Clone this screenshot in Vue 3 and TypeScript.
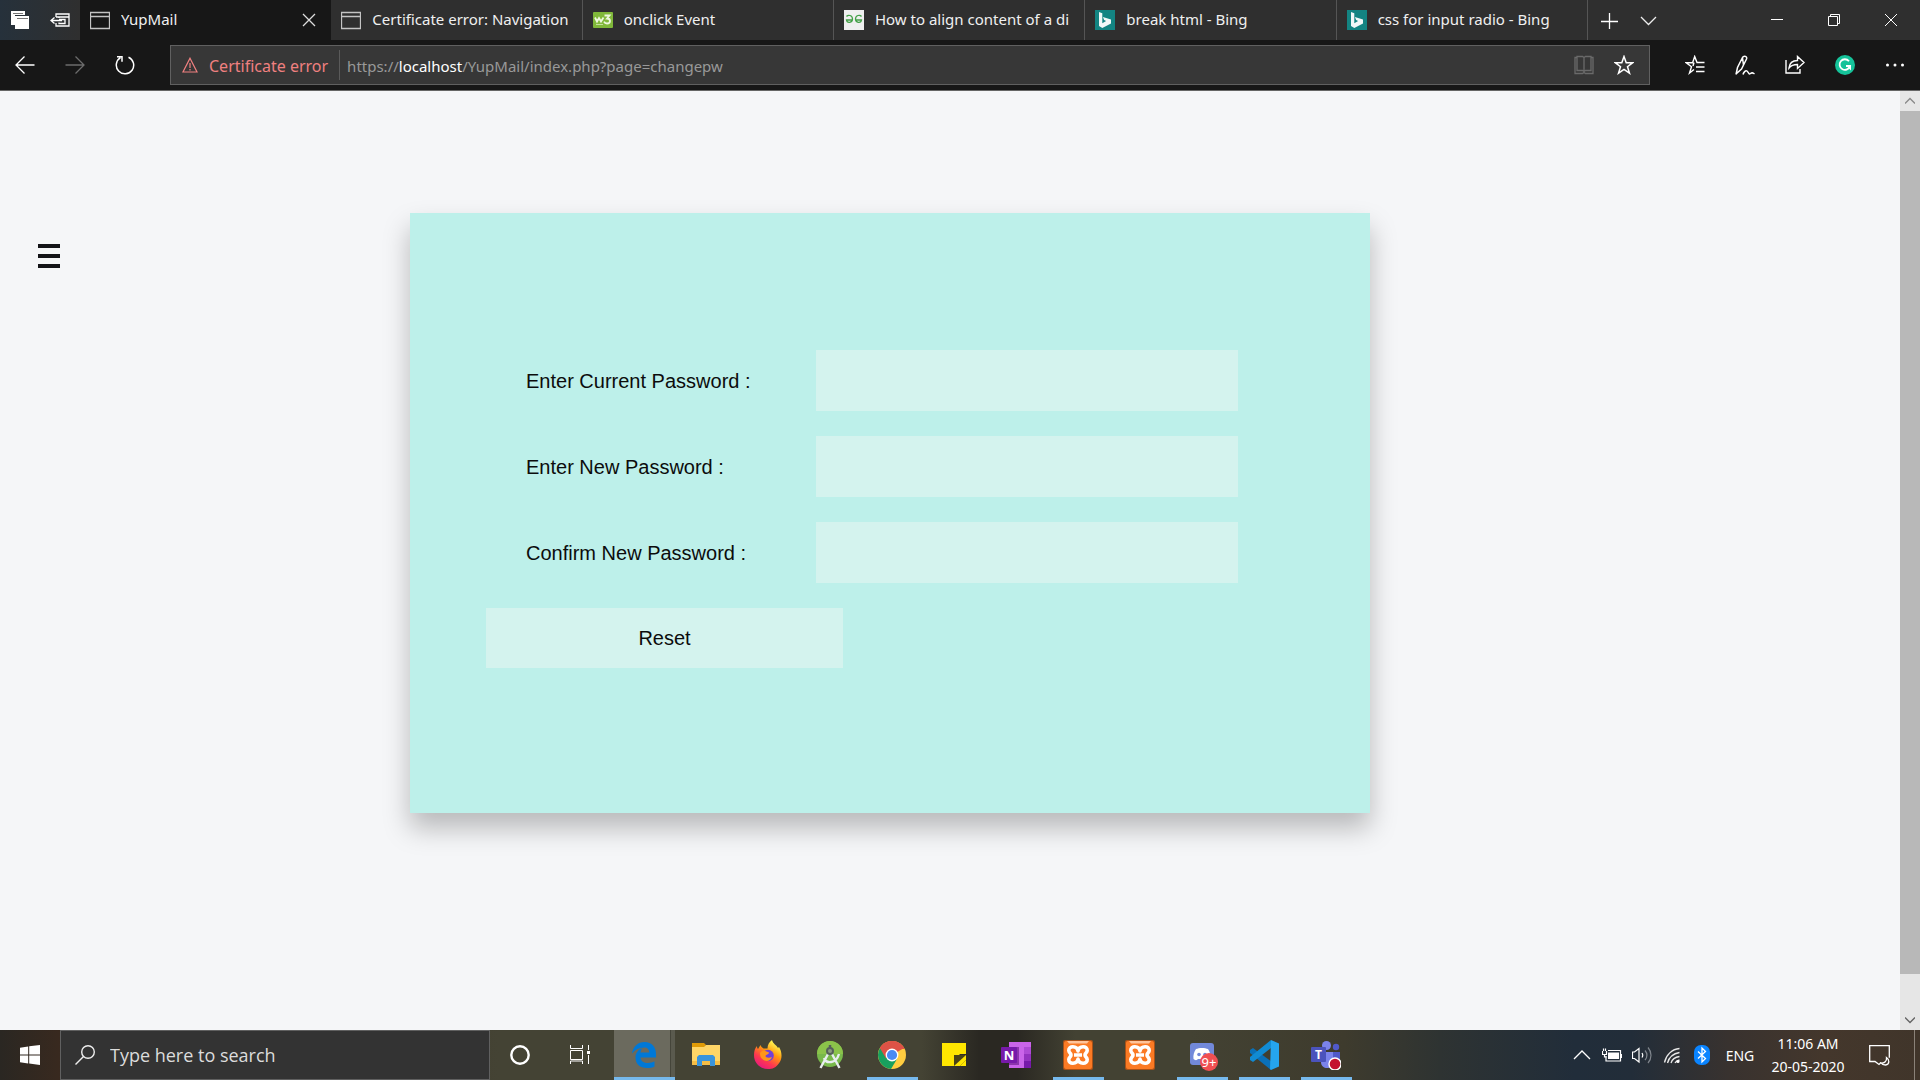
<script setup lang="ts">
import { ref } from 'vue'

type TabIcon = 'page' | 'w3' | 'gfg' | 'bing'

interface Tab {
  title: string
  icon: TabIcon
}

interface Field {
  id: string
  label: string
}

interface TaskApp {
  id: string
  name: string
  open: boolean
}

const tabs: Tab[] = [
  { title: 'YupMail', icon: 'page' },
  { title: 'Certificate error: Navigation', icon: 'page' },
  { title: 'onclick Event', icon: 'w3' },
  { title: 'How to align content of a di', icon: 'gfg' },
  { title: 'break html - Bing', icon: 'bing' },
  { title: 'css for input radio - Bing', icon: 'bing' },
]

const fields: Field[] = [
  { id: 'current', label: 'Enter Current Password :' },
  { id: 'new', label: 'Enter New Password :' },
  { id: 'confirm', label: 'Confirm New Password :' },
]

const apps: TaskApp[] = [
  { id: 'edge', name: 'Microsoft Edge', open: true },
  { id: 'explorer', name: 'File Explorer', open: false },
  { id: 'firefox', name: 'Firefox', open: false },
  { id: 'studio', name: 'Android Studio', open: false },
  { id: 'chrome', name: 'Google Chrome', open: true },
  { id: 'notes', name: 'Sticky Notes', open: false },
  { id: 'onenote', name: 'OneNote', open: false },
  { id: 'xampp', name: 'XAMPP', open: true },
  { id: 'xampp', name: 'XAMPP Control', open: false },
  { id: 'discord', name: 'Discord', open: true },
  { id: 'vscode', name: 'Visual Studio Code', open: true },
  { id: 'teams', name: 'Microsoft Teams', open: true },
]

const active = ref(0)
const values = ref<Record<string, string>>({ current: '', new: '', confirm: '' })

function reset(): void {
  values.value = { current: '', new: '', confirm: '' }
}
</script>

<template>
  <div class="screen">
    <header class="tabbar">
      <div class="tab-tools">
        <button class="tool-40" aria-label="Tabs you've set aside">
          <svg width="20" height="20" viewBox="0 0 20 20">
            <path d="M1 1h14v4H5v10H1z" fill="#fff" />
            <path d="M5 6h14v13H5z" fill="#fff" />
            <path d="M3 3.500h10M7 8.500h11" stroke="#777" stroke-width="1.200" />
          </svg>
        </button>
        <button class="tool-40" aria-label="Set these tabs aside">
          <svg width="20" height="20" viewBox="0 0 20 20" fill="none" stroke="#fff" stroke-width="1.300">
            <path d="M6 7V4h13v12H6v-3M6 7h13M1 10.500h11M4.500 7.500 1 10.500l3.500 3M9 8v-1M9 12.500v1h6V9.500h-6" />
          </svg>
        </button>
      </div>
      <nav class="tabs" role="tablist">
        <div
          v-for="(tab, i) in tabs"
          :key="tab.title"
          class="tab"
          :class="{ active: i === active }"
          role="tab"
          @click="active = i"
        >
          <svg v-if="tab.icon === 'page'" class="tab-icon" viewBox="0 0 20 20" fill="none" stroke="#c4c4c4">
            <path d="M.5 2.500h19v16H.5zM.5 6.500h19" stroke-width="1.300" />
          </svg>
          <svg v-else-if="tab.icon === 'w3'" class="tab-icon" viewBox="0 0 20 20">
            <rect y="2" width="20" height="16" rx="1" fill="#80b83a" />
            <path
              d="M2 7.500l2 4 2-3.500 2 3.500 2.500-4M11.500 5.500h5l-2.500 3c4 0 4 5 0 5-1.500 0-2.500-.8-3-1.800"
              fill="none"
              stroke="#eef7df"
              stroke-width="1.800"
            />
            <path d="M3 14.500h7" stroke="#c5e09e" />
          </svg>
          <svg v-else-if="tab.icon === 'gfg'" class="tab-icon" viewBox="0 0 20 20">
            <rect width="20" height="20" fill="#efefef" />
            <path
              d="M2.500 6.500C4 4.500 8.500 5 8.500 9s-5.500 4.500-6 1h6M17.500 6.500C16 4.500 11.500 5 11.500 9s5.500 4.500 6 1h-6"
              fill="none"
              stroke="#43a047"
              stroke-width="1.300"
            />
          </svg>
          <svg v-else class="tab-icon" viewBox="0 0 20 20">
            <rect width="20" height="20" fill="#138482" />
            <path d="M4 2l3.300 1.200v10l3.800-2.200-2-1-1.200-3L16 9.500v4L7.300 18 4 16z" fill="#f2f8f8" />
          </svg>
          <span class="tab-title">{{ tab.title }}</span>
          <button v-if="i === active" class="tab-close" aria-label="Close tab">
            <svg width="14" height="14" viewBox="0 0 14 14" stroke="#ddd" stroke-width="1.300">
              <path d="M1 1l12 12M13 1 1 13" />
            </svg>
          </button>
        </div>
      </nav>
      <div class="tab-actions">
        <button class="tool-39" aria-label="New tab">
          <svg width="17" height="17" viewBox="0 0 17 17" stroke="#fff" stroke-width="1.300">
            <path d="M8.500 1v17M0 9.500h17" />
          </svg>
        </button>
        <button class="tool-39" aria-label="Show tab previews">
          <svg width="17" height="17" viewBox="0 0 17 17" fill="none" stroke="#eee" stroke-width="1.300">
            <path d="M1 5l7.500 7.500L16 5" />
          </svg>
        </button>
      </div>
      <div class="window-controls">
        <button aria-label="Minimize">
          <svg width="13" height="12" viewBox="0 0 13 12" stroke="#fff"><path d="M0 5.500h12" /></svg>
        </button>
        <button aria-label="Restore">
          <svg width="13" height="12" viewBox="0 0 13 12" fill="none" stroke="#fff">
            <path d="M.5 2.500h9v9h-9zM2.500 2.500v-2h9v9h-2" />
          </svg>
        </button>
        <button aria-label="Close">
          <svg width="13" height="12" viewBox="0 0 13 12" stroke="#fff"><path d="M0 0l12 12M12 0 0 12" /></svg>
        </button>
      </div>
    </header>

    <div class="toolbar">
      <button class="tool-50" aria-label="Back">
        <svg width="20" height="20" viewBox="0 0 20 20" fill="none" stroke="#fff" stroke-width="1.300">
          <path d="M19.500 10H1M9.500 1.500 1 10l8.500 8.500" />
        </svg>
      </button>
      <button class="tool-50" aria-label="Forward">
        <svg width="20" height="20" viewBox="0 0 20 20" fill="none" stroke="#6c6c6c" stroke-width="1.300">
          <path d="M.5 10H19M10.500 1.500 19 10l-8.500 8.500" />
        </svg>
      </button>
      <button class="tool-50" aria-label="Refresh">
        <svg width="20" height="20" viewBox="0 0 20 20" fill="none" stroke="#fff" stroke-width="1.500">
          <path d="M13.500 2.200A8.700 8.700 0 1 1 5.500 2.700M2 1.700h5v5" />
        </svg>
      </button>
      <div class="address">
        <svg class="warning" width="16" height="16" viewBox="0 0 16 16" fill="none" stroke="#f08080" stroke-width="1.200">
          <path d="M8 1.200 15 15H1zM8 6v5M8 12v1.500" />
        </svg>
        <span class="cert">Certificate error</span>
        <span class="divider"></span>
        <div class="url" role="textbox" aria-label="Address" contenteditable="true" spellcheck="false">https://<span class="host">localhost</span>/YupMail/index.php?page=changepw</div>
        <button class="tool-40" aria-label="Reading view">
          <svg width="20" height="20" viewBox="0 0 20 20" fill="none" stroke="#6a6a6a" stroke-width="1.300">
            <path d="M3 2.500H1v16h7.500l1.500-1 1.500 1H19v-16h-2M3 1.500h5.500l1.500 1 1.500-1H17v14h-5.500l-1.500 1-1.500-1H3zM10 2.500v15" />
          </svg>
        </button>
        <button class="tool-40" aria-label="Add to favorites">
          <svg width="20" height="20" viewBox="0 0 20 20" fill="none" stroke="#fff" stroke-width="1.500">
            <path d="M10 1.500l2.200 6.200h6.600l-5.300 4 2 6.500L10 14.300l-5.500 3.900 2-6.500-5.300-4h6.600z" />
          </svg>
        </button>
      </div>
      <div class="toolbar-right">
        <button class="tool-50" aria-label="Favorites">
          <svg width="20" height="20" viewBox="0 0 20 20" fill="none" stroke="#fff" stroke-width="1.400">
            <path d="M19.500 7.500H12L9.700 1.500 7.600 7.700H1.200l5.300 4-2 6.300 4.500-3.500M9 7.500 8 11M11 12h8.500M11 16.500h8.500" />
          </svg>
        </button>
        <button class="tool-50" aria-label="Add notes">
          <svg width="20" height="20" viewBox="0 0 20 20" fill="none" stroke="#fff" stroke-width="1.500">
            <path d="M1 19.500l1.500-7L7.500 2.500c1.500-2.500 5-1 4 1.500L6.500 14 1 19M7.500 3l1 7M8 19.500c.5-2 2.500-4.500 4-3.500 2 1.500 1.500 4 3.500 2.500s2.500-.5 4 .5" />
          </svg>
        </button>
        <button class="tool-50" aria-label="Share">
          <svg width="20" height="20" viewBox="0 0 20 20" fill="none" stroke="#fff" stroke-width="1.400">
            <path d="M1 5v13h14v-4M4 13c.5-5 3.500-7.500 8.500-7.500V1.500l6.500 6-6.500 6V9.500C8.500 9.500 6 10.500 4 13z" />
          </svg>
        </button>
        <button class="tool-50" aria-label="Grammarly">
          <svg width="20" height="20" viewBox="0 0 20 20">
            <circle cx="10" cy="10" r="10" fill="#15c39a" />
            <path d="M14 6.200A5.300 5.300 0 1 0 15 11h-4" fill="none" stroke="#fff" stroke-width="1.800" />
            <path d="M11.500 11H16v4.500z" fill="#fff" />
          </svg>
        </button>
        <button class="tool-50" aria-label="Settings and more">
          <svg width="20" height="20" viewBox="0 0 20 20" fill="#fff">
            <circle cx="2.500" cy="10" r="1.500" /><circle cx="10" cy="10" r="1.500" /><circle cx="17.500" cy="10" r="1.500" />
          </svg>
        </button>
      </div>
    </div>

    <div class="viewport">
      <main class="page">
        <aside class="side">
          <button class="menu" aria-label="Open menu"><span></span><span></span><span></span></button>
        </aside>
        <form class="card" @submit.prevent="reset">
          <div v-for="field in fields" :key="field.id" class="row">
            <label :for="field.id">{{ field.label }}</label>
            <input :id="field.id" v-model="values[field.id]" type="password" />
          </div>
          <button class="submit" type="submit">Reset</button>
        </form>
      </main>
      <div class="scrollbar">
        <button aria-label="Scroll up">
          <svg width="10" height="10" viewBox="0 0 10 10" fill="none" stroke="#8a8a8a" stroke-width="1.400"><path d="M0 7.500 5 2.500l5 5" /></svg>
        </button>
        <div class="track"><div class="thumb"></div></div>
        <button aria-label="Scroll down">
          <svg width="10" height="10" viewBox="0 0 10 10" fill="none" stroke="#666" stroke-width="1.400"><path d="M0 2.500l5 5 5-5" /></svg>
        </button>
      </div>
    </div>

    <footer class="taskbar">
      <button class="task-60" aria-label="Start">
        <svg width="20" height="20" viewBox="0 0 20 20" fill="#fff">
          <path d="M0 2.700 8.200 1.500V9.400H0zM9.200 1.300 20 0v9.400H9.200zM0 10.400h8.200v8L0 17.300zM9.200 10.400H20V20L9.200 18.500z" />
        </svg>
      </button>
      <label class="search">
        <svg width="20" height="20" viewBox="0 0 20 20" fill="none" stroke="#eee" stroke-width="1.400">
          <circle cx="13" cy="7" r="6.300" /><path d="M8.500 11.500.5 19.500" />
        </svg>
        <input type="text" aria-label="Search" placeholder="Type here to search" />
      </label>
      <button class="task-60" aria-label="Cortana">
        <svg width="20" height="20" viewBox="0 0 20 20" fill="none" stroke="#fff" stroke-width="2.400">
          <circle cx="10" cy="10" r="8.700" />
        </svg>
      </button>
      <button class="task-60" aria-label="Task View">
        <svg width="20" height="20" viewBox="0 0 20 20" fill="none" stroke="#fff">
          <path d="M.5 0v3.500h12V0M.5 5.500h12v9H.5zM.5 19v-3h12v3M18.500 0v5M18.500 10v9" />
          <path d="M17 6h3v3h-3z" fill="#fff" stroke="none" />
        </svg>
      </button>
      <div class="apps">
        <button
          v-for="app in apps"
          :key="app.name"
          class="app"
          :class="{ open: app.open, focused: app.id === 'edge' }"
          :aria-label="app.name"
        >
          <svg width="30" height="30" viewBox="0 0 30 30">
            <g v-if="app.id === 'edge'">
              <path
                d="M3 13.500C4 6.500 9 2 15.500 2 23 2 27 7 27 14v3.500H11.500c.3 4 3.500 5.500 7.500 5.500 2.500 0 4.700-.6 6.500-1.700v5.200C23.500 27.500 21 28 18 28c-7 0-11.500-4-11.500-10.500 0-4.500 2.500-8 7-9.500-1 1.200-1.800 2.800-2 4.500h8.700c0-3-1.500-5-4.700-5C10 7.500 6 9.500 3 13.500z"
                fill="#0078d7"
              />
            </g>
            <g v-else-if="app.id === 'explorer'">
              <path d="M1 3h12l2 2-2 3H1z" fill="#e09b07" />
              <path d="M1 7h12l2-2h14v20H1z" fill="#ffd667" />
              <path d="M1 21h28v4H1z" fill="#f5bd45" />
              <path d="M6 26V17l2-2h14l2 2v9h-5v-5h-8v5z" fill="#3994dc" />
            </g>
            <g v-else-if="app.id === 'firefox'">
              <defs>
                <linearGradient id="fx" x1="0.8" y1="0" x2="0.2" y2="1">
                  <stop offset="0.1" stop-color="#fff44f" /><stop offset="0.4" stop-color="#ff980e" />
                  <stop offset="0.7" stop-color="#ff3750" /><stop offset="1" stop-color="#e31587" />
                </linearGradient>
              </defs>
              <path
                d="M4 6c0 2 .5 2.500 1 3l2.500-4c.5 2 2 3 3.500 3.500h3.500C14.500 5 16 2 19 0c1 4 4 4.500 6 8l1-1c3 4.500 3.500 11 .5 15.500C23 28 19.500 29 15 29 7 29 1 23 1 15c0-4 1-7 3-9z"
                fill="url(#fx)"
              />
              <circle cx="15" cy="15.500" r="5.800" fill="#7040d8" />
              <path d="M7 13c2-3 5-2.500 6.500-1.500l2.500 1c0 2-3 2-3.500 3.500 0 2 4 2 6.500 1-1.500 4-5.500 5-8.500 3S7 16 7 13z" fill="#ff9519" />
            </g>
            <g v-else-if="app.id === 'studio'">
              <circle cx="15" cy="14" r="13" fill="#78b84b" />
              <path d="M2 14a13 13 0 0 1 26 0z" fill="#8bc34a" />
              <path d="M13 14 5.500 28M17 14l7.500 14M9 18c2 6 12 6 15-4" fill="none" stroke="#e8edf0" stroke-width="2.400" />
              <circle cx="15" cy="11" r="3" fill="#8b9a80" stroke="#55605a" stroke-width="2" />
              <path d="M15 5v4" stroke="#55605a" stroke-width="2.500" />
            </g>
            <g v-else-if="app.id === 'chrome'">
              <circle cx="15" cy="15" r="14" fill="#ffcd40" />
              <path d="M15 15 2.900 8a14 14 0 0 1 24.200 0z" fill="#de5246" />
              <path d="M2.900 8A14 14 0 0 0 14 29l6-10-5-4z" fill="#18a05e" />
              <path d="M2.900 8 9 18.500 15 9h12.600A14 14 0 0 0 2.900 8z" fill="#de5246" />
              <circle cx="15" cy="15" r="6.400" fill="#fff" /><circle cx="15" cy="15" r="5.100" fill="#4a8af4" />
            </g>
            <g v-else-if="app.id === 'notes'">
              <path d="M3 3h24v11h-6l-6 6v6H3z" fill="#ffe600" />
              <path d="M15 26V15h12z" fill="#4a4315" />
              <path d="M21 26l6-6v6z" fill="#ffe600" />
              <path d="M15 26l12-11v5l-6 6z" fill="#ffe600" />
            </g>
            <g v-else-if="app.id === 'onenote'">
              <path d="M8 2h22v26H8z" fill="#ca64ea" />
              <path d="M23 7h7v7h-7z" fill="#ae4bd5" /><path d="M23 14h7v7h-7z" fill="#9332bf" /><path d="M23 21h7v7h-7z" fill="#7719aa" />
              <path d="M8 7h10v18H8z" fill="#8b35ad" />
              <rect y="7" width="16" height="16" rx="1" fill="#7719aa" />
              <text x="8" y="19.500" text-anchor="middle" font-size="13" font-weight="700" fill="#fff">N</text>
            </g>
            <g v-else-if="app.id === 'xampp'">
              <rect width="30" height="30" rx="2" fill="#a95117" />
              <rect x="1" y="1" width="28" height="28" rx="2" fill="#fb7a24" />
              <path d="M4 1h22l-2 2.500H6z" fill="#ffc49a" />
              <path
                d="M15 11C14 5.500 5.500 5.500 5.800 10.500 6 13 8 13 8 15s-2 2-2.200 4.500C5.500 24.500 14 24.500 15 19c1 5.500 9.500 5.500 9.200.5C24 17 22 17 22 15s2-2 2.200-4.500C24.500 5.500 16 5.500 15 11zM11 15h8"
                fill="none"
                stroke="#fff"
                stroke-width="3.600"
                stroke-linejoin="round"
              />
            </g>
            <g v-else-if="app.id === 'discord'">
              <rect x="3" y="3" width="24" height="22" rx="3" fill="#7289da" />
              <path d="M9 9c3-1.500 9-1.500 12 0 2 3 3 6 2.500 10-1.500 1.500-3.500 1.500-4.500 0h-8c-1 1.500-3 1.500-4.500 0C6 15 7 12 9 9z" fill="#fff" />
              <circle cx="12" cy="14.500" r="1.800" fill="#7289da" /><circle cx="18" cy="14.500" r="1.800" fill="#7289da" />
            </g>
            <g v-else-if="app.id === 'vscode'">
              <path d="M1 10l3-2 19 14-1 8L1 13z" fill="#0a70b8" />
              <path d="M1 20l3 2L22 8V0L1 17z" fill="#118bd3" />
              <path d="M22 0l8 3.500v23L22 30l-1-1z" fill="#25a5ee" />
            </g>
            <g v-else>
              <circle cx="15.500" cy="5.500" r="4.500" fill="#7b83eb" /><circle cx="25" cy="7" r="3.200" fill="#5059c9" />
              <path d="M20 12h9v9c0 5-9 5-9 0z" fill="#5059c9" /><path d="M10 12h12v10c0 8-12 8-12 0z" fill="#7b83eb" />
              <rect y="7" width="15" height="15" rx="1" fill="#4b53bc" />
              <text x="7.500" y="18.500" text-anchor="middle" font-size="12" font-weight="700" fill="#fff">T</text>
              <circle cx="24" cy="24" r="6" fill="#c4112f" stroke="#fff" stroke-width="1.400" />
            </g>
          </svg>
          <span v-if="app.id === 'discord'" class="badge">9+</span>
        </button>
      </div>
      <div class="tray">
        <button class="tray-30" aria-label="Show hidden icons">
          <svg width="18" height="18" viewBox="0 0 18 18" fill="none" stroke="#fff" stroke-width="1.300"><path d="M1 13l8-8 8 8" /></svg>
        </button>
        <button class="tray-30" aria-label="Battery">
          <svg width="20" height="20" viewBox="0 0 20 20" fill="none" stroke="#fff" stroke-width="1.200">
            <path d="M4 11v5h14.500V5.500H6M19.500 9v4" /><path d="M6 7.500h11V14H6z" fill="#fff" stroke="none" />
            <path d="M.5 6v3.500h4V6M1.500 3.500V6M3.500 3.500V6M2.500 9.500V12h2" />
          </svg>
        </button>
        <button class="tray-30" aria-label="Volume">
          <svg width="20" height="20" viewBox="0 0 20 20" fill="none" stroke="#fff" stroke-width="1.200">
            <path d="M.5 7v6.500h2L7 17V3.500L2.500 7zM10 8c1 1.500 1 3 0 4.500" />
            <path d="M13 5.500c2.500 3 2.500 6.500 0 9.500M16 2.500c4 4.500 4 11 0 15.500" stroke="#7f858c" />
          </svg>
        </button>
        <button class="tray-30" aria-label="Network">
          <svg width="18" height="18" viewBox="0 0 18 18" fill="none" stroke="#e8e8e8" stroke-width="1.300">
            <path d="M1.500 16.500C3 9 9 3 16.500 2.500M4.500 17C6 11.500 10.500 7.500 16.500 6.500M8 17c1-3.500 4.500-6 8.500-6.500M12 17c.8-1.500 2.500-2.500 4.500-3" />
            <circle cx="15" cy="15.500" r="1.500" fill="#fff" stroke="none" />
          </svg>
        </button>
        <button class="tray-30" aria-label="Bluetooth">
          <svg width="16" height="20" viewBox="0 0 16 20">
            <rect width="16" height="20" rx="7" fill="#0a84ff" />
            <path d="M4 6.500l7.500 7L8 17V3l3.500 3.500-7.500 7" fill="none" stroke="#fff" stroke-width="1.300" />
          </svg>
        </button>
        <button class="lang">ENG</button>
        <button class="clock"><time>11:06 AM</time><time>20-05-2020</time></button>
        <button class="notify" aria-label="Notifications">
          <svg width="21" height="21" viewBox="0 0 21 21" fill="none" stroke="#fff" stroke-width="1.300">
            <path d="M12 17.500 10 19.500 6 16.500H.7V.7h19.600v12" />
            <path d="M17.500 12.500c3 2 3.500 7-1 7.500-2 0-3.500-.5-4.500-2 3.500.5 6-2 5.500-5.500z" />
          </svg>
        </button>
        <button class="desktop" aria-label="Show desktop"></button>
      </div>
    </footer>
  </div>
</template>

<style>
body {
  margin: 0;
}
</style>

<style scoped>
.screen {
  display: flex;
  flex-direction: column;
  min-height: 100vh;
  font-family: 'Noto Sans', 'Open Sans', sans-serif;
  color: #fff;
}

.screen *,
.screen *::before {
  box-sizing: border-box;
}

button,
input {
  margin: 0;
  padding: 0;
  border: 0;
  border-radius: 0;
  background: none;
  color: inherit;
  font: inherit;
  outline: none;
}

svg {
  display: block;
  flex: none;
}

button {
  display: flex;
  align-items: center;
  justify-content: center;
}

.tool-39 { width: 39px; height: 40px; }
.tool-40 { width: 40px; height: 40px; flex: none; }
.tool-50 { width: 50px; height: 50px; flex: none; }

.tabbar {
  display: flex;
  height: 40px;
  background: linear-gradient(90deg, #26313b, #2f2f2f 80px);
}

.tab-tools,
.tab-actions,
.window-controls,
.toolbar-right {
  display: flex;
  flex: none;
}

.tabs {
  display: flex;
  flex: 0 1 1508px;
  min-width: 0;
}

.tab {
  display: flex;
  align-items: center;
  flex: 1 1 0;
  gap: 11px;
  min-width: 0;
  padding: 0 11px 0 10px;
  border-right: 1px solid #555;
}

.tab.active {
  flex-basis: 2px;
  background: #171717;
  border-color: #171717;
}

.tab-icon {
  width: 20px;
  height: 20px;
}

.tab-title {
  flex: 1;
  min-width: 0;
  padding-bottom: 2px;
  overflow: hidden;
  white-space: nowrap;
  font-size: 15px;
  line-height: 20px;
  color: #f0f0f0;
}

.tab-close {
  width: 20px;
  height: 20px;
}

.tab-actions {
  padding-left: 2px;
}

.window-controls {
  margin-left: auto;
}

.window-controls button {
  width: 57px;
  height: 40px;
}

.toolbar {
  display: flex;
  align-items: center;
  height: 51px;
  background: #171717;
  border-bottom: 1px solid #666;
}

.address {
  display: flex;
  align-items: center;
  flex: 1;
  min-width: 0;
  height: 40px;
  margin: 0 20px;
  padding: 0 5px 0 11px;
  background: #373737;
  border: 1px solid #606060;
}

.cert {
  margin-left: 11px;
  padding-top: 2px;
  font-size: 16px;
  line-height: 24px;
  white-space: nowrap;
  color: #f08080;
}

.divider {
  width: 1px;
  height: 30px;
  margin: 0 7px 0 11px;
  background: #5a5a5a;
}

.url {
  flex: 1;
  min-width: 0;
  padding-top: 2px;
  overflow: hidden;
  white-space: nowrap;
  font-size: 15px;
  line-height: 24px;
  color: #999;
  outline: none;
}

.host {
  color: #fff;
}

.viewport {
  display: flex;
  flex: 1;
  background: #f5f6f8;
}

.page {
  display: flex;
  align-items: flex-start;
  flex: 1;
  min-width: 0;
  padding: 122px 0;
  font-family: 'Liberation Sans', Arial, sans-serif;
  font-size: 20px;
  line-height: 24px;
  color: #0c0c0c;
}

.side {
  flex: none;
  width: 410px;
  padding: 31px 38px;
}

.menu {
  flex-direction: column;
  gap: 6px;
}

.menu span {
  width: 22px;
  height: 4px;
  background: #141418;
}

.card {
  display: flex;
  flex-direction: column;
  flex: 0 1 960px;
  gap: 25px;
  min-height: 600px;
  padding: 137px 132px 137px 76px;
  background: #bdf0ea;
  box-shadow: 0 15px 25px rgba(0, 0, 0, 0.25);
}

.row {
  display: flex;
  align-items: center;
}

.row label {
  flex: none;
  width: 330px;
  padding-left: 40px;
}

.row input {
  flex: 1;
  min-width: 0;
  height: 61px;
  padding: 0 20px;
  background: #d4f3ee;
}

.submit {
  width: 357px;
  height: 60px;
  background: #d4f3ee;
}

.scrollbar {
  display: flex;
  flex-direction: column;
  flex: none;
  width: 20px;
  background: #e6e6e6;
}

.scrollbar button {
  width: 20px;
  height: 20px;
}

.track {
  display: grid;
  flex: 1;
}

.thumb {
  height: 96%;
  background: #b8b8b8;
}

.taskbar {
  display: flex;
  height: 50px;
  background: linear-gradient(
    90deg,
    #2a2722 0,
    #38291f 3%,
    #444334 26%,
    #444334 48%,
    #2a2822 51%,
    #2a2822 53%,
    #434233 56%,
    #434233 62%,
    #3e3b2d 70%,
    #2e3332 75%,
    #212d3a 82%,
    #222d39 85%,
    #38322f 90%,
    #44372c 95%,
    #40352a 100%
  );
}

.task-60 {
  flex: none;
  width: 60px;
  height: 50px;
}

.search {
  display: flex;
  align-items: center;
  flex: 0 1 430px;
  gap: 15px;
  min-width: 0;
  padding: 0 14px;
  background: #333;
  border: 1px solid #606060;
}

.search input {
  flex: 1;
  min-width: 0;
  font-family: 'Open Sans', 'Noto Sans', sans-serif;
  font-size: 18px;
  line-height: 26px;
}

.search input::placeholder {
  color: #dcdcdc;
  opacity: 1;
}

.apps {
  display: flex;
  flex: none;
  margin-left: 3px;
}

.app {
  position: relative;
  width: 62px;
  height: 50px;
}

.app.open::before {
  content: '';
  position: absolute;
  bottom: 0;
  left: 6px;
  right: 5px;
  height: 3px;
  background: #76b9ed;
}

.app.focused {
  background: linear-gradient(90deg, transparent 1px, #6b6a5e 1px 57px, #45453a 57px 58px, #5a5a4e 58px);
}

.app.focused::before {
  left: 1px;
  right: 0;
}

.badge {
  position: absolute;
  right: 15px;
  bottom: 9px;
  width: 18px;
  height: 18px;
  border-radius: 50%;
  background: #f04f52;
  font-size: 13px;
  line-height: 18px;
  text-align: center;
}

.tray {
  display: flex;
  flex: none;
  margin-left: auto;
  font-size: 14px;
  line-height: 23px;
}

.tray-30 {
  width: 30px;
}

.lang {
  width: 46px;
}

.clock {
  flex-direction: column;
  width: 90px;
}

.notify {
  width: 52px;
}

.desktop {
  width: 6px;
  margin-left: 9px;
  border-left: 1px solid #8a8278;
}
</style>
